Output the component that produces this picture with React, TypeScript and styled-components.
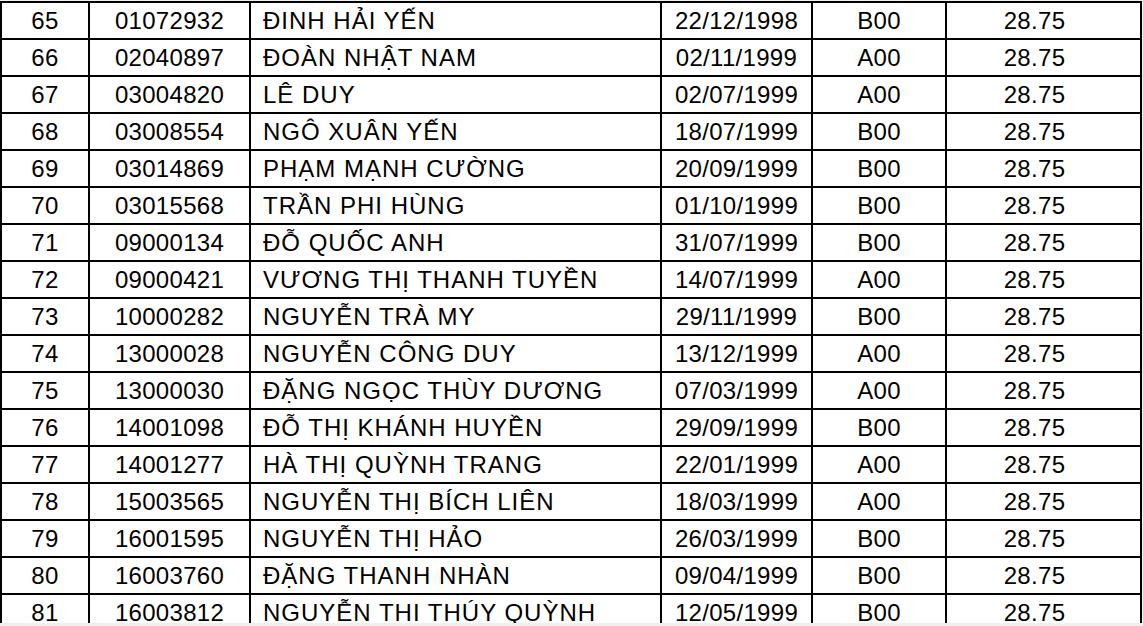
import styled, { createGlobalStyle } from 'styled-components';

const GlobalStyle = createGlobalStyle`
  html, body {
    margin: 0;
    padding: 0;
    background: #f0f0f0;
  }
`;

type Row = [number, string, string, string, string, string];

const rows: Row[] = [
  [65, '01072932', 'ĐINH HẢI YẾN', '22/12/1998', 'B00', '28.75'],
  [66, '02040897', 'ĐOÀN NHẬT NAM', '02/11/1999', 'A00', '28.75'],
  [67, '03004820', 'LÊ DUY', '02/07/1999', 'A00', '28.75'],
  [68, '03008554', 'NGÔ XUÂN YẾN', '18/07/1999', 'B00', '28.75'],
  [69, '03014869', 'PHẠM MẠNH CƯỜNG', '20/09/1999', 'B00', '28.75'],
  [70, '03015568', 'TRẦN PHI HÙNG', '01/10/1999', 'B00', '28.75'],
  [71, '09000134', 'ĐỖ QUỐC ANH', '31/07/1999', 'B00', '28.75'],
  [72, '09000421', 'VƯƠNG THỊ THANH TUYỀN', '14/07/1999', 'A00', '28.75'],
  [73, '10000282', 'NGUYỄN TRÀ MY', '29/11/1999', 'B00', '28.75'],
  [74, '13000028', 'NGUYỄN CÔNG DUY', '13/12/1999', 'A00', '28.75'],
  [75, '13000030', 'ĐẶNG NGỌC THÙY DƯƠNG', '07/03/1999', 'A00', '28.75'],
  [76, '14001098', 'ĐỖ THỊ KHÁNH HUYỀN', '29/09/1999', 'B00', '28.75'],
  [77, '14001277', 'HÀ THỊ QUỲNH TRANG', '22/01/1999', 'A00', '28.75'],
  [78, '15003565', 'NGUYỄN THỊ BÍCH LIÊN', '18/03/1999', 'A00', '28.75'],
  [79, '16001595', 'NGUYỄN THỊ HẢO', '26/03/1999', 'B00', '28.75'],
  [80, '16003760', 'ĐẶNG THANH NHÀN', '09/04/1999', 'B00', '28.75'],
  [81, '16003812', 'NGUYỄN THỊ THÚY QUỲNH', '12/05/1999', 'B00', '28.75'],
];

const columnWidths = [88, 161, 411, 151, 134, 195];

export default function App() {
  return (
    <>
      <GlobalStyle />
      <Sheet>
        <Table>
          <colgroup>
            {columnWidths.map((w, i) => (
              <col key={i} style={{ width: w }} />
            ))}
          </colgroup>
          <tbody>
            {rows.map(([no, id, name, dob, group, score]) => (
              <tr key={no}>
                <Cell>{no}</Cell>
                <Cell>{id}</Cell>
                <NameCell>{name}</NameCell>
                <Cell>{dob}</Cell>
                <Cell>{group}</Cell>
                <Cell $padRight={18}>{score}</Cell>
              </tr>
            ))}
          </tbody>
        </Table>
      </Sheet>
    </>
  );
}

const Sheet = styled.div`
  margin-top: 1px;
  width: 1142px;
  height: 622px;
  overflow: hidden;
  background: #fff;
`;

const Table = styled.table`
  width: 1142px;
  table-layout: fixed;
  border-collapse: collapse;
  font-family: 'Liberation Sans', Arial, sans-serif;
  font-size: 24px;
  color: #000;
`;

const Cell = styled.td<{ $padRight?: number }>`
  height: 35px;
  padding: 0 ${({ $padRight }) => $padRight ?? 0}px 0 0;
  border: 2px solid #000;
  text-align: center;
  vertical-align: middle;
  white-space: nowrap;
  line-height: 1;
  letter-spacing: 0.3px;
`;

const NameCell = styled(Cell)`
  padding-left: 12px;
  text-align: left;
  letter-spacing: 1px;
`;
